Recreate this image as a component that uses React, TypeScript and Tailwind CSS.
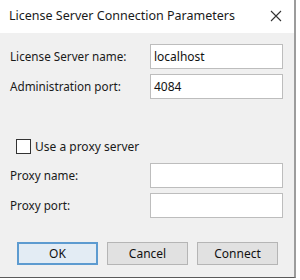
import React from 'react';

const font = { fontFamily: '"Noto Sans", "Open Sans", sans-serif' };

function Field({ label, value }: { label: string; value?: string }) {
  return (
    <div className="flex items-center h-[25px]">
      <span className="w-[150px] pl-[10px] text-[11.7px] text-[#1a1a1a]">{label}</span>
      <div className="w-[133px] h-[25px] bg-white border border-[#bdbdbd] flex items-center pl-[3px] text-[12px] text-[#111]">
        {value}
      </div>
    </div>
  );
}

function Btn({ children, primary }: { children: React.ReactNode; primary?: boolean }) {
  return (
    <button
      className={
        primary
          ? 'w-[81px] h-[23px] bg-[#e3ecf4] border-2 border-[#5d9bd0] text-[12px] text-[#111] flex items-center justify-center'
          : 'w-[81px] h-[23px] bg-[#e1e1e1] border border-[#b5b5b5] text-[12px] text-[#111] flex items-center justify-center'
      }
    >
      {children}
    </button>
  );
}

export default function App() {
  return (
    <div className="w-[300px] h-[280px] bg-white overflow-hidden" style={font}>
      <div className="w-[296px] h-[278px] border-r-2 border-b border-r-[#9c9c9c] border-b-[#5a5a5a] flex flex-col">
        <div className="h-[33px] bg-white flex items-center justify-between pl-[9px] pr-[12px]">
          <span className="text-[12.5px] text-[#1a1a1a]">License Server Connection Parameters</span>
          <svg width="12" height="12" viewBox="0 0 12 12" className="mt-[-2px]">
            <path d="M1 1 L11 11 M11 1 L1 11" stroke="#333" strokeWidth="1.1" />
          </svg>
        </div>
        <div className="flex-1 bg-[#f0f0f0] flex flex-col pt-[11px]">
          <div className="flex flex-col gap-[5px]">
            <Field label="License Server name:" value="localhost" />
            <Field label="Administration port:" value="4084" />
          </div>
          <div className="flex items-center mt-[40px] pl-[16px] h-[15px]">
            <div className="w-[15px] h-[15px] bg-white border border-[#333]" />
            <span className="ml-[4px] text-[12px] text-[#1a1a1a]">Use a proxy server</span>
          </div>
          <div className="flex flex-col gap-[5px] mt-[9px]">
            <Field label="Proxy name:" />
            <Field label="Proxy port:" />
          </div>
          <div className="flex gap-[9px] pl-[17px] mt-[24px]">
            <Btn primary>OK</Btn>
            <Btn>Cancel</Btn>
            <Btn>Connect</Btn>
          </div>
        </div>
      </div>
    </div>
  );
}
